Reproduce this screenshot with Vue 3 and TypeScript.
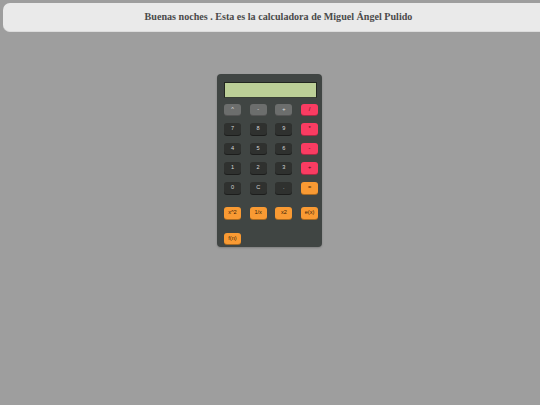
<script setup lang="ts">
const rows: { label: string; kind: string }[][] = [
  [{ label: '^', kind: 'gray' }, { label: '-', kind: 'gray' }, { label: '+', kind: 'gray' }, { label: '/', kind: 'pink' }],
  [{ label: '7', kind: 'dark' }, { label: '8', kind: 'dark' }, { label: '9', kind: 'dark' }, { label: '*', kind: 'pink' }],
  [{ label: '4', kind: 'dark' }, { label: '5', kind: 'dark' }, { label: '6', kind: 'dark' }, { label: '-', kind: 'pink' }],
  [{ label: '1', kind: 'dark' }, { label: '2', kind: 'dark' }, { label: '3', kind: 'dark' }, { label: '+', kind: 'pink' }],
  [{ label: '0', kind: 'dark' }, { label: 'C', kind: 'dark' }, { label: '.', kind: 'dark' }, { label: '=', kind: 'orange' }],
]
const fnRow = ['x^2', '1/x', 'x2', 'e(x)']
</script>

<template>
  <div class="page">
    <header class="bar">Buenas noches . Esta es la calculadora de Miguel Ángel Pulido</header>
    <main class="calc">
      <div class="screen"></div>
      <div class="keys">
        <template v-for="(row, i) in rows" :key="i">
          <button v-for="(k, j) in row" :key="j" class="key" :class="k.kind">{{ k.label }}</button>
        </template>
      </div>
      <div class="keys fn">
        <button v-for="f in fnRow" :key="f" class="key orange">{{ f }}</button>
      </div>
      <div class="keys fn">
        <button class="key orange">f(n)</button>
      </div>
    </main>
  </div>
</template>

<style>
html, body { margin: 0; background: #9e9e9e; }
</style>

<style scoped>
.page {
  width: 540px;
  height: 405px;
  overflow: hidden;
  background: #9e9e9e;
  padding-top: 3px;
  box-sizing: border-box;
}
.bar {
  margin-left: 3px;
  width: 560px;
  height: 29px;
  box-sizing: border-box;
  padding-right: 9px;
  background: #eaeaea;
  border-radius: 7px;
  border-bottom: 1px solid #dcdcdc;
  color: #4a4a4a;
  font: bold 10.1px/28px "Liberation Serif", serif;
  text-align: center;
}
.calc {
  width: 105.5px;
  height: 172.7px;
  margin: 42px 0 0 216.8px;
  padding: 8.4px 7.2px 0;
  box-sizing: border-box;
  background: #404543;
  border-radius: 4px;
  box-shadow: 0 1px 2px rgba(0, 0, 0, 0.2);
}
.screen {
  height: 16px;
  width: 93px;
  box-sizing: border-box;
  background: #bccf97;
  border: 1px solid #22261f;
  border-bottom-color: #3a4036;
  margin-bottom: 5.2px;
}
.keys {
  display: grid;
  grid-template-columns: repeat(4, 17px);
  column-gap: 8.7px;
  row-gap: 8px;
}
.fn { margin-top: 13.7px; }
.key {
  height: 11.6px;
  padding: 0;
  border: 0;
  border-radius: 3px;
  font: 5.6px/11.6px "Liberation Sans", sans-serif;
  text-align: center;
}
.gray { background: #6c6e6d; color: #e0e0e0; box-shadow: 0 1px 0 #555; }
.dark { background: #2f312f; color: #d8d8d8; box-shadow: 0 1px 0 #1c1d1c; }
.pink { background: #fa3c62; color: #3a1018; box-shadow: 0 1px 0 #a82a45; }
.orange { background: #f99a33; color: #3a2208; box-shadow: 0 1px 0 #a86a22; }
</style>
